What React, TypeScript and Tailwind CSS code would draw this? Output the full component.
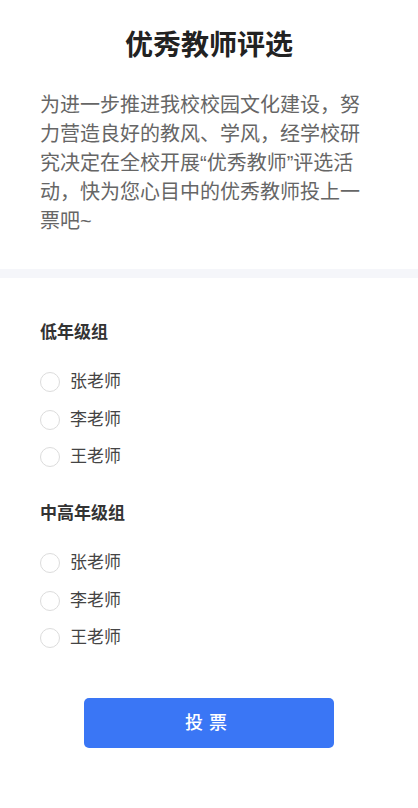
const groups = [
  { title: '低年级组', teachers: ['张老师', '李老师', '王老师'] },
  { title: '中高年级组', teachers: ['张老师', '李老师', '王老师'] },
];

const font = "font-['Liberation_Sans','Noto_Sans_CJK_SC',sans-serif]";

export default function App() {
  return (
    <div className={`min-h-[808px] bg-white ${font}`}>
      <header className="px-10 pt-[26px] pb-[33px]">
        <h1 className="text-center text-[28px] leading-[40px] font-bold text-[#222]">优秀教师评选</h1>
        <p className="mt-[25px] text-[20px] leading-[29px] text-[#666]">
          为进一步推进我校校园文化建设，努力营造良好的教风、学风，经学校研究决定在全校开展“优秀教师”评选活动，快为您心目中的优秀教师投上一票吧~
        </p>
      </header>

      <div className="h-[9px] bg-[#f5f6fa]" />

      <main className="px-10 pt-[43px]">
        {groups.map((group, gi) => (
          <section key={gi} className="mb-[35px]">
            <h2 className="text-[17px] leading-[24px] font-bold text-[#333]">{group.title}</h2>
            <div className="mt-[27px] flex flex-col gap-[17.5px]">
              {group.teachers.map((name, i) => (
                <label key={i} className="flex items-center gap-[10px]">
                  <span className="h-[20px] w-[20px] rounded-full border border-[#dcdcdc] bg-white" />
                  <span className="text-[17px] leading-[20px] text-[#444]">{name}</span>
                </label>
              ))}
            </div>
          </section>
        ))}

        <div className="flex justify-center pt-[15px]">
          <button className="h-[50px] w-[250px] rounded-[5px] bg-[#3a76f5] text-[18px] font-medium tracking-[6px] text-white">
            投票
          </button>
        </div>
      </main>
    </div>
  );
}
